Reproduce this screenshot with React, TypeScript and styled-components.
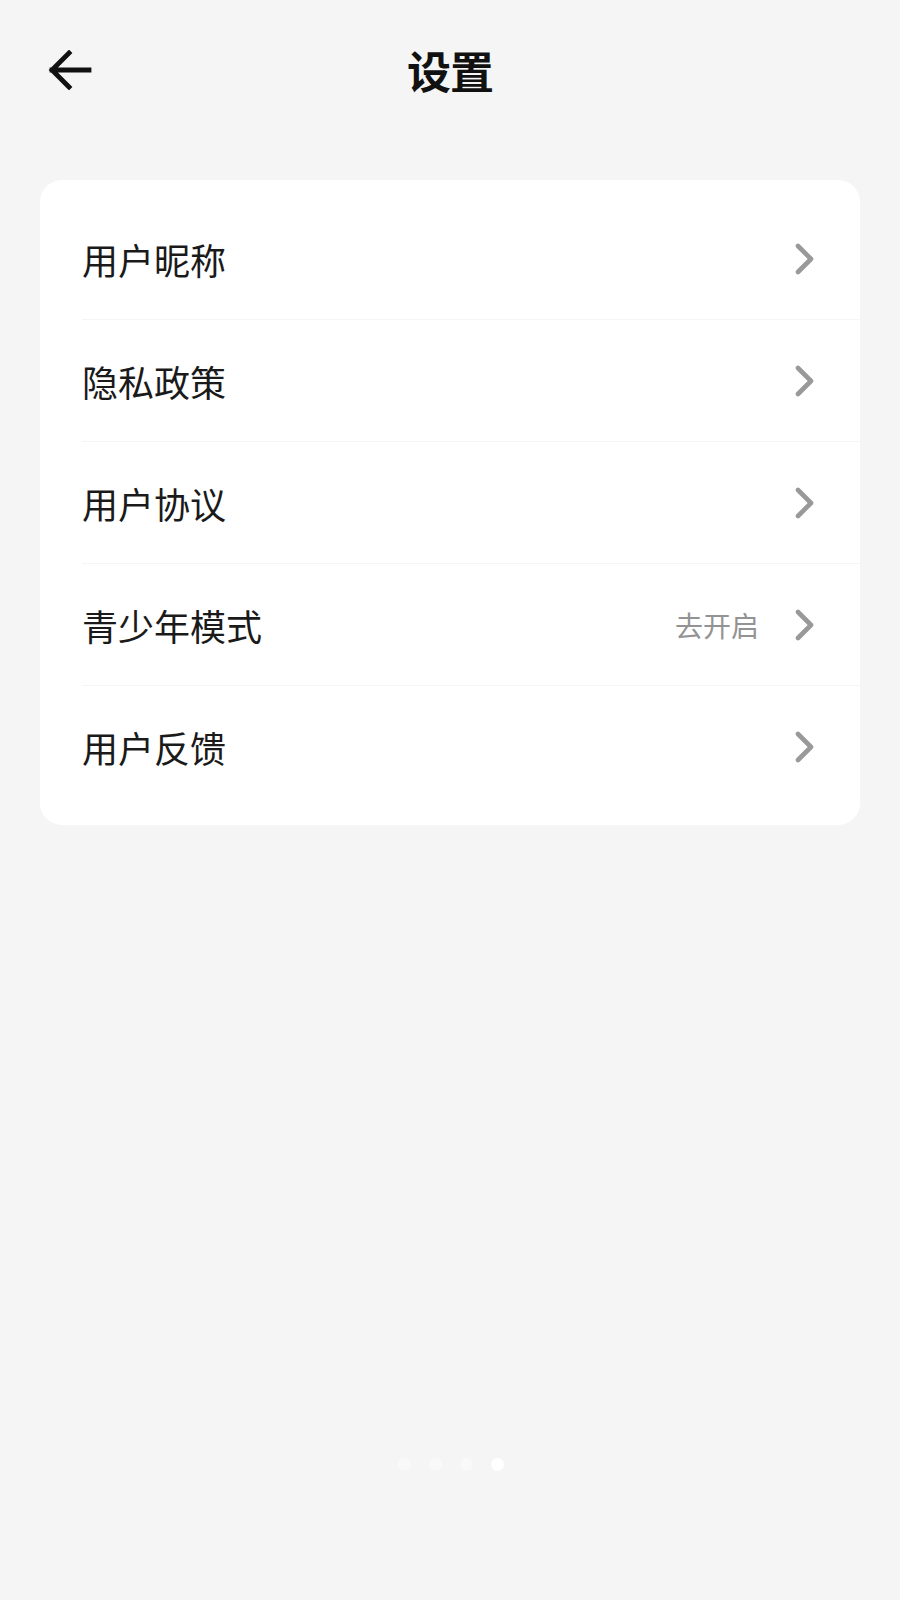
import React from 'react'
import styled, { createGlobalStyle } from 'styled-components'

const GlobalStyle = createGlobalStyle`
  html, body {
    margin: 0;
    padding: 0;
    background: #f5f5f5;
  }
  * {
    box-sizing: border-box;
  }
`

const Page = styled.div`
  min-height: 1600px;
  display: flex;
  flex-direction: column;
  background: #f5f5f5;
  font-family: "Noto Sans CJK SC", "Noto Sans", sans-serif;
`

// Header
const Header = styled.div`
  height: 140px;
  display: grid;
  grid-template-columns: 1fr auto 1fr;
  align-items: center;
  padding: 0 48px;
`

const BackButton = styled.button`
  justify-self: start;
  width: 44px;
  height: 40px;
  padding: 0;
  border: none;
  background: none;
  display: flex;
  color: #111;
  cursor: pointer;
`

const Title = styled.h1`
  margin: 0;
  font-size: 44px;
  font-weight: 700;
  color: #111;
  line-height: 1;
  letter-spacing: -1px;
`

// Card
const Card = styled.div`
  margin: 40px 40px 0;
  background: #fff;
  border-radius: 22px;
  padding: 18px 0;
`

const Row = styled.div<{ last?: boolean }>`
  height: ${({ last }) => (last ? '121px' : '122px')};
  margin-left: 42px;
  padding-right: 45px;
  display: flex;
  align-items: center;
  border-bottom: ${({ last }) => (last ? 'none' : '1px solid #f5f5f5')};
  cursor: pointer;
`

const Label = styled.div`
  flex: 1;
  font-size: 36px;
  color: #1a1a1a;
  line-height: 1;
`

const Hint = styled.span`
  font-size: 28px;
  color: #939393;
  margin-right: 36px;
  line-height: 1;
`

const Chevron = styled.svg`
  width: 20px;
  height: 32px;
  display: block;
`

// Pager dots
const Dots = styled.div`
  margin-top: auto;
  padding-bottom: 129px;
  display: flex;
  justify-content: center;
  gap: 18px;
  padding-left: 2px;
`

const Dot = styled.span<{ active?: boolean }>`
  width: 13px;
  height: 13px;
  border-radius: 50%;
  background: ${({ active }) => (active ? '#ffffff' : '#f9f9f9')};
`

const items: { label: string; hint?: string }[] = [
  { label: '用户昵称' },
  { label: '隐私政策' },
  { label: '用户协议' },
  { label: '青少年模式', hint: '去开启' },
  { label: '用户反馈' },
]

function ArrowBack() {
  return (
    <svg width="44" height="40" viewBox="0 0 44 40" fill="none">
      <path
        d="M21 3 L4 20 L21 37 M4 20 H41"
        stroke="currentColor"
        strokeWidth="4.8"
        strokeLinecap="square"
        strokeLinejoin="miter"
      />
    </svg>
  )
}

export default function App() {
  return (
    <Page>
      <GlobalStyle />
      <Header>
        <BackButton aria-label="返回">
          <ArrowBack />
        </BackButton>
        <Title>设置</Title>
        <div />
      </Header>
      <Card>
        {items.map((item, i) => (
          <Row key={item.label} last={i === items.length - 1}>
            <Label>{item.label}</Label>
            {item.hint && <Hint>{item.hint}</Hint>}
            <Chevron viewBox="0 0 20 32" fill="none">
              <polyline
                points="3,3 16,16 3,29"
                stroke="#999"
                strokeWidth="4.6"
                strokeLinecap="round"
                strokeLinejoin="round"
              />
            </Chevron>
          </Row>
        ))}
      </Card>
      <Dots>
        <Dot />
        <Dot />
        <Dot />
        <Dot active />
      </Dots>
    </Page>
  )
}
